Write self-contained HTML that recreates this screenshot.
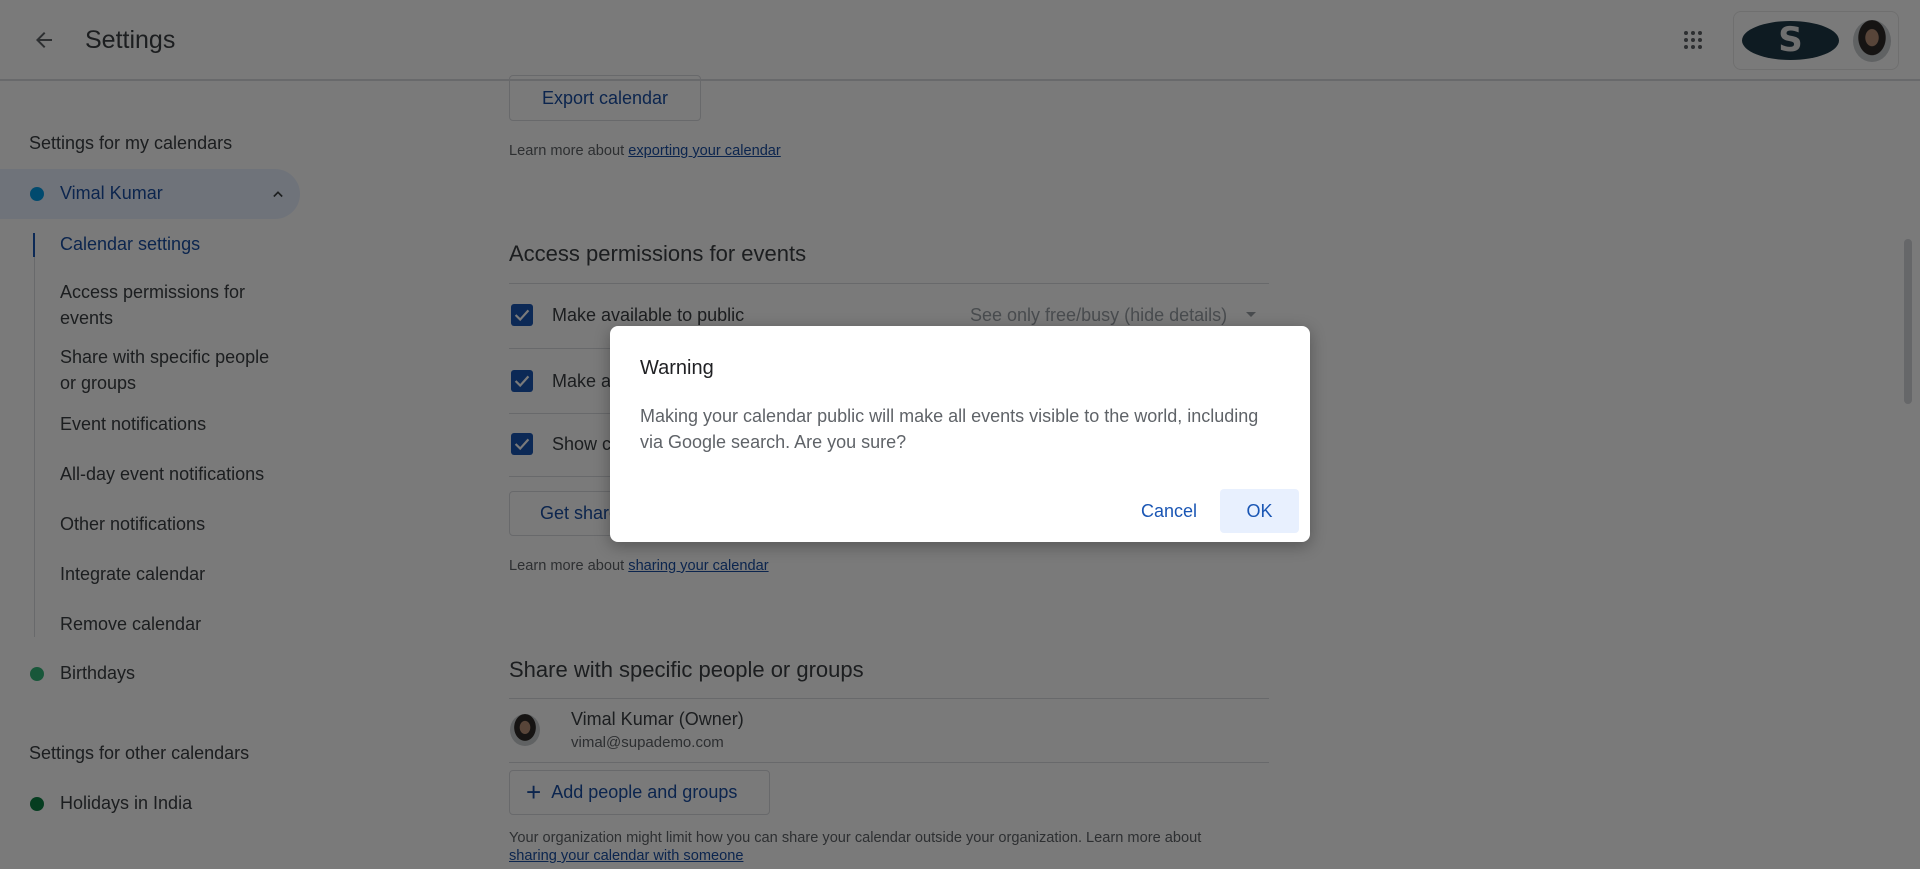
<!DOCTYPE html>
<html><head><meta charset="utf-8"><style>
*{margin:0;padding:0;box-sizing:border-box}
body{width:1920px;height:869px;overflow:hidden;background:#fff;font-family:"Liberation Sans",Arial,sans-serif;color:#3c4043;position:relative}
.a{position:absolute;white-space:nowrap}
.hdr{position:absolute;left:0;top:0;width:1920px;height:81px;border-bottom:2px solid #dadce0;background:#fff}
.side{font-size:18px;color:#3c4043}
.blue{color:#1a4fa3}
.btn{position:absolute;border:1px solid #dadce0;border-radius:4px;color:#1a4fa3;font-size:18px;display:flex;align-items:center;justify-content:center}
.small{font-size:14.6px;color:#5f6368}
.small u{color:#1a4fa3}
.hr{position:absolute;left:509px;width:760px;height:1px;background:#dadce0}
.cb{position:absolute;left:511px;width:22px;height:22px;background:#1a56b4;border-radius:3px}
.cb svg{display:block}
.dot{position:absolute;width:14px;height:14px;border-radius:50%}
.ov{position:absolute;left:0;top:0;width:1920px;height:869px;background:rgba(0,0,0,0.52)}
.dlg{position:absolute;left:610px;top:326px;width:700px;height:216px;background:#fff;border-radius:8px;box-shadow:0 4px 16px rgba(0,0,0,.3)}
.av{background:radial-gradient(ellipse at 50% 42%,#b89078 0 24%,#2e2a28 26% 50%,#c8ccd0 52%)}
</style></head><body>
<div class="hdr"></div>
<svg class="a" style="left:32px;top:28px" width="24" height="24" viewBox="0 0 24 24"><path d="M20 11H7.8l5.6-5.6L12 4l-8 8 8 8 1.4-1.4L7.8 13H20z" fill="#5f6368"/></svg>
<div class="a" style="left:85px;top:26px;font-size:25px;color:#3c4043">Settings</div>
<svg class="a" style="left:1681px;top:28px" width="24" height="24" viewBox="0 0 24 24" fill="#5f6368"><circle cx="5" cy="5" r="2"/><circle cx="12" cy="5" r="2"/><circle cx="19" cy="5" r="2"/><circle cx="5" cy="12" r="2"/><circle cx="12" cy="12" r="2"/><circle cx="19" cy="12" r="2"/><circle cx="5" cy="19" r="2"/><circle cx="12" cy="19" r="2"/><circle cx="19" cy="19" r="2"/></svg>
<div class="a" style="left:1733px;top:11px;width:166px;height:59px;border:1px solid #e8e8e8;border-radius:8px"></div>
<div class="a" style="left:1742px;top:21px;width:97px;height:39px;border-radius:50%;background:#1e3947;color:#e8e8e8;font:900 34px 'DejaVu Sans',sans-serif;text-align:center;line-height:39px">S</div>
<div class="a av" style="left:1853px;top:20px;width:38px;height:42px;border-radius:50%"></div>

<div class="a side" style="left:29px;top:133px">Settings for my calendars</div>
<div class="a" style="left:0;top:169px;width:300px;height:50px;background:#e8f0fe;border-radius:0 25px 25px 0"></div>
<div class="dot" style="left:30px;top:187px;background:#039be5"></div>
<div class="a side blue" style="left:60px;top:183px">Vimal Kumar</div>
<svg class="a" style="left:268px;top:184px" width="20" height="20" viewBox="0 0 24 24"><path d="M7 15l5-5 5 5" stroke="#3c4043" stroke-width="2" fill="none"/></svg>
<div class="a" style="left:34px;top:233px;width:1px;height:404px;background:#dadce0"></div>
<div class="a" style="left:33px;top:233px;width:2px;height:24px;background:#1a56b4"></div>
<div class="a side blue" style="left:60px;top:234px">Calendar settings</div>
<div class="a side" style="left:60px;top:279px;line-height:26px">Access permissions for<br>events</div>
<div class="a side" style="left:60px;top:344px;line-height:26px">Share with specific people<br>or groups</div>
<div class="a side" style="left:60px;top:414px">Event notifications</div>
<div class="a side" style="left:60px;top:464px">All-day event notifications</div>
<div class="a side" style="left:60px;top:514px">Other notifications</div>
<div class="a side" style="left:60px;top:564px">Integrate calendar</div>
<div class="a side" style="left:60px;top:614px">Remove calendar</div>
<div class="dot" style="left:30px;top:667px;background:#33b679"></div>
<div class="a side" style="left:60px;top:663px">Birthdays</div>
<div class="a side" style="left:29px;top:743px">Settings for other calendars</div>
<div class="dot" style="left:30px;top:797px;background:#0b8043"></div>
<div class="a side" style="left:60px;top:793px">Holidays in India</div>

<div class="btn" style="left:509px;top:75px;width:192px;height:46px">Export calendar</div>
<div class="a small" style="left:509px;top:143px">Learn more about <u>exporting your calendar</u></div>
<div class="a" style="left:509px;top:241px;font-size:22px;color:#3c4043">Access permissions for events</div>
<div class="hr" style="top:283px"></div>
<div class="cb" style="top:304px"><svg width="22" height="22" viewBox="0 0 24 24"><path d="M5 12l5 5 9-10" stroke="#fff" stroke-width="2.4" fill="none"/></svg></div>
<div class="a side" style="left:552px;top:305px">Make available to public</div>
<div class="a side" style="left:970px;top:305px;color:#9aa0a6">See only free/busy (hide details)</div>
<div class="a" style="left:1246px;top:312px;border:5px solid transparent;border-top:5px solid #9aa0a6"></div>
<div class="hr" style="top:348px"></div>
<div class="cb" style="top:370px"><svg width="22" height="22" viewBox="0 0 24 24"><path d="M5 12l5 5 9-10" stroke="#fff" stroke-width="2.4" fill="none"/></svg></div>
<div class="a side" style="left:552px;top:371px">Make available for supademo.com</div>
<div class="hr" style="top:413px"></div>
<div class="cb" style="top:433px"><svg width="22" height="22" viewBox="0 0 24 24"><path d="M5 12l5 5 9-10" stroke="#fff" stroke-width="2.4" fill="none"/></svg></div>
<div class="a side" style="left:552px;top:434px">Show calendar info</div>
<div class="hr" style="top:476px"></div>
<div class="btn" style="left:509px;top:491px;width:230px;height:45px;justify-content:flex-start;padding-left:30px">Get shareable link</div>
<div class="a small" style="left:509px;top:558px">Learn more about <u>sharing your calendar</u></div>
<div class="a" style="left:509px;top:657px;font-size:22px;color:#3c4043">Share with specific people or groups</div>
<div class="hr" style="top:698px"></div>
<div class="a av" style="left:510px;top:714px;width:30px;height:32px;border-radius:50%"></div>
<div class="a side" style="left:571px;top:709px">Vimal Kumar (Owner)</div>
<div class="a" style="left:571px;top:734px;font-size:15px;color:#5f6368">vimal@supademo.com</div>
<div class="hr" style="top:762px"></div>
<div class="btn" style="left:509px;top:770px;width:261px;height:45px;justify-content:flex-start;padding-left:16px"><span style="font-size:26px;margin-right:10px;font-weight:300">+</span>Add people and groups</div>
<div class="a small" style="left:509px;top:830px">Your organization might limit how you can share your calendar outside your organization. Learn more about</div>
<div class="a small" style="left:509px;top:848px"><u>sharing your calendar with someone</u></div>

<div class="ov"></div>
<div class="a" style="left:1904px;top:239px;width:8px;height:165px;border-radius:4px;background:#666769"></div>

<div class="dlg">
<div class="a" style="left:30px;top:31px;font-size:20px;color:#202124">Warning</div>
<div class="a" style="left:30px;top:77px;font-size:18px;line-height:26px;color:#5f6368">Making your calendar public will make all events visible to the world, including<br>via Google search. Are you sure?</div>
<div class="a" style="left:531px;top:175px;font-size:18px;color:#1a56b4">Cancel</div>
<div class="a" style="left:610px;top:163px;width:79px;height:44px;background:#e8f0fe;border-radius:4px;font-size:18px;color:#1a56b4;text-align:center;line-height:44px">OK</div>
</div>
</body></html>
